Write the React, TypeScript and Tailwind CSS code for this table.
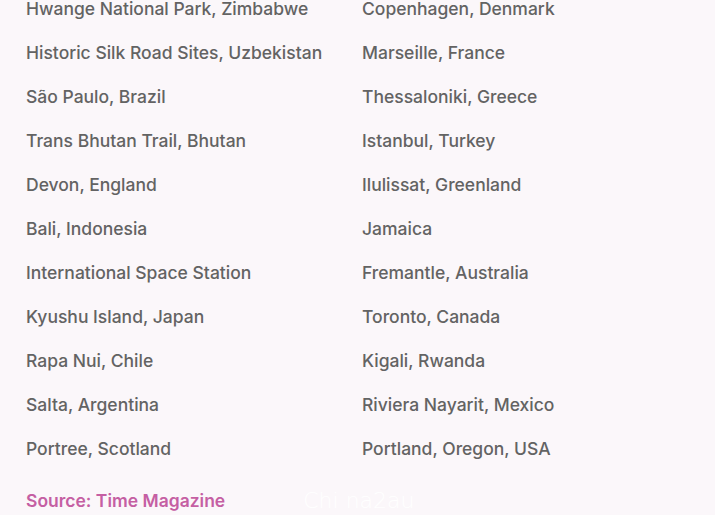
import React from "react";

const left = [
  "Hwange National Park, Zimbabwe",
  "Historic Silk Road Sites, Uzbekistan",
  "São Paulo, Brazil",
  "Trans Bhutan Trail, Bhutan",
  "Devon, England",
  "Bali, Indonesia",
  "International Space Station",
  "Kyushu Island, Japan",
  "Rapa Nui, Chile",
  "Salta, Argentina",
  "Portree, Scotland",
];
const right = [
  "Copenhagen, Denmark",
  "Marseille, France",
  "Thessaloniki, Greece",
  "Istanbul, Turkey",
  "Ilulissat, Greenland",
  "Jamaica",
  "Fremantle, Australia",
  "Toronto, Canada",
  "Kigali, Rwanda",
  "Riviera Nayarit, Mexico",
  "Portland, Oregon, USA",
];

export default function App() {
  return (
    <div
      className="w-[715px] h-[515px] overflow-hidden bg-[#fbf7fa] relative"
      style={{ fontFamily: "Inter, 'Open Sans', sans-serif" }}
    >
      <div className="pl-[26px] -mt-[3px]">
        <div className="grid grid-cols-[336px_1fr]">
          <div className="flex flex-col">
            {left.map((t) => (
              <div key={t} className="h-[44px] leading-[24px] text-[17.5px] font-medium text-[#636363]">
                {t}
              </div>
            ))}
          </div>
          <div className="flex flex-col">
            {right.map((t) => (
              <div key={t} className="h-[44px] leading-[24px] text-[17.5px] font-medium text-[#636363]">
                {t}
              </div>
            ))}
          </div>
        </div>
        <div className="mt-[8px] flex items-center">
          <div className="text-[17.5px] leading-[24px] font-semibold text-[#c55fa3]">
            Source: Time Magazine
          </div>
          <div
            className="ml-[78px] text-[22px] leading-[24px] text-white font-light"
            style={{ fontFamily: "'DejaVu Sans', sans-serif" }}
          >
            Chi na2au
          </div>
        </div>
      </div>
    </div>
  );
}
